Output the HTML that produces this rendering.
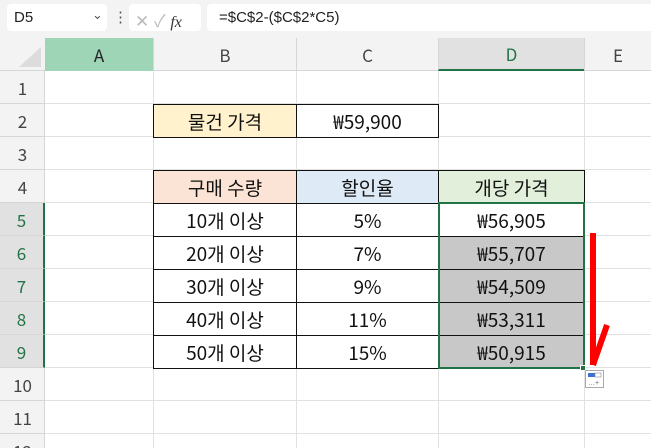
<html style="overflow:hidden;height:448px"><head><style>
html,body{margin:0;width:651px;height:448px;overflow:hidden}
body{background:#fff;font-family:"Liberation Sans","Noto Sans CJK KR",sans-serif;position:relative}
.a{position:absolute;box-sizing:border-box}
.t{display:flex;align-items:center;justify-content:center}
.cell{font-size:19px;color:#111;font-family:"Noto Sans CJK KR","Liberation Sans",sans-serif}
.rh{font-size:17px;color:#444;font-family:"Noto Sans CJK KR","Liberation Sans",sans-serif}
</style></head><body>
<div class="a" style="left:0;top:0;width:651px;height:38px;background:#f3f3f3"></div>
<div class="a" style="left:7px;top:4px;width:100px;height:27px;background:#fff;border-radius:4px;font-size:15px;padding:5px 0 0 7px;color:#222">D5<span style="position:absolute;left:85px;top:3px;font-size:13px;color:#555">⌄</span></div>
<div class="a" style="left:113px;top:8px;font-size:15px;color:#555">⋮</div>
<div class="a" style="left:129px;top:4px;width:72px;height:27px;background:#fff;border-radius:4px;font-size:17px;color:#bbb;padding:3px 0 0 6px">✕ ✓ <i style="color:#333;font-family:'Liberation Serif';font-size:16px">fx</i></div>
<div class="a" style="left:207px;top:4px;width:444px;height:27px;background:#fff;border-radius:4px 0 0 4px;font-size:15px;padding:5px 0 0 12px;color:#222">=$C$2-($C$2*C5)</div>
<div class="a" style="left:0;top:38px;width:651px;height:33px;background:#f3f3f3;border-bottom:1px solid #d6d6d6"></div>
<svg class="a" style="left:15px;top:45px" width="28" height="24"><polygon points="26,2 26,22 4,22" fill="#dcdcdc"/></svg>
<div class="a t rh" style="left:45px;top:38px;width:108px;height:33px;background:#9fd5b7;color:#222">A</div>
<div class="a t rh" style="left:153px;top:38px;width:143px;height:33px;border-left:1px solid #d6d6d6">B</div>
<div class="a t rh" style="left:296px;top:38px;width:142px;height:33px;border-left:1px solid #d6d6d6">C</div>
<div class="a t rh" style="left:438px;top:38px;width:146px;height:33px;border-left:1px solid #d6d6d6;background:#e1e1e1;color:#217346;border-bottom:2px solid #217346">D</div>
<div class="a t rh" style="left:584px;top:38px;width:67px;height:33px;border-left:1px solid #d6d6d6">E</div>
<div class="a" style="left:0;top:71px;width:45px;height:377px;background:#f3f3f3;border-right:1px solid #d6d6d6"></div>
<div id="g"></div>
<script>
var s='';for(var r=1;r<=12;r++){var y=71+(r-1)*33;var g=r>=5&&r<=9;
s+='<div class="a t rh" style="left:0;top:'+y+'px;width:45px;height:33px;border-bottom:1px solid #d6d6d6;'+(g?'color:#217346;background:#e1e1e1;border-right:2px solid #217346':'')+'">'+r+'</div>';
s+='<div class="a" style="left:45px;top:'+(y+32)+'px;width:606px;height:1px;background:#e1e1e1"></div>';}
[153,296,438,584].forEach(function(x){s+='<div class="a" style="left:'+x+'px;top:71px;width:1px;height:377px;background:#e1e1e1"></div>'});
function c(x,y,w,t,bg,ex){s+='<div class="a t cell" style="left:'+x+'px;top:'+y+'px;width:'+w+'px;height:34px;border:1px solid #111;background:'+bg+';'+(ex||'')+'">'+t+'</div>'}
c(153,104,144,'물건 가격','#fff2cc');c(296,104,143,'₩59,900','#fff');
c(153,170,144,'구매 수량','#fbe4d5');c(296,170,143,'할인율','#deebf7');c(438,170,147,'개당 가격','#e2efda');
var q=['10','20','30','40','50'],p=['5%','7%','9%','11%','15%'],v=['₩56,905','₩55,707','₩54,509','₩53,311','₩50,915'];
for(var i=0;i<5;i++){var y=203+i*33;c(153,y,144,q[i]+'개 이상','#fff');c(296,y,143,p[i],'#fff');c(438,y,147,v[i],i?'#c8c8c8':'#fff');}
s+='<div class="a" style="left:438px;top:202px;width:147px;height:167px;border:2px solid #217346"></div>';
s+='<div class="a" style="left:580px;top:365px;width:6px;height:6px;background:#217346;border:1px solid #fff"></div>';
document.getElementById('g').innerHTML=s;
</script>
<svg class="a" style="left:580px;top:228px" width="40" height="165">
<line x1="13" y1="5" x2="13" y2="137" stroke="#f00" stroke-width="6"/>
<line x1="27" y1="97" x2="13" y2="137" stroke="#f00" stroke-width="6"/>
<rect x="5.5" y="142.5" width="18" height="17" fill="#fff" stroke="#aaa"/>
<rect x="8" y="145" width="7" height="4" fill="#3b6fd0"/><rect x="15" y="145" width="6" height="4" fill="#fff" stroke="#888" stroke-width=".6"/>
<text x="8" y="157" font-size="7" fill="#666">…+</text>
</svg>
</body></html>
